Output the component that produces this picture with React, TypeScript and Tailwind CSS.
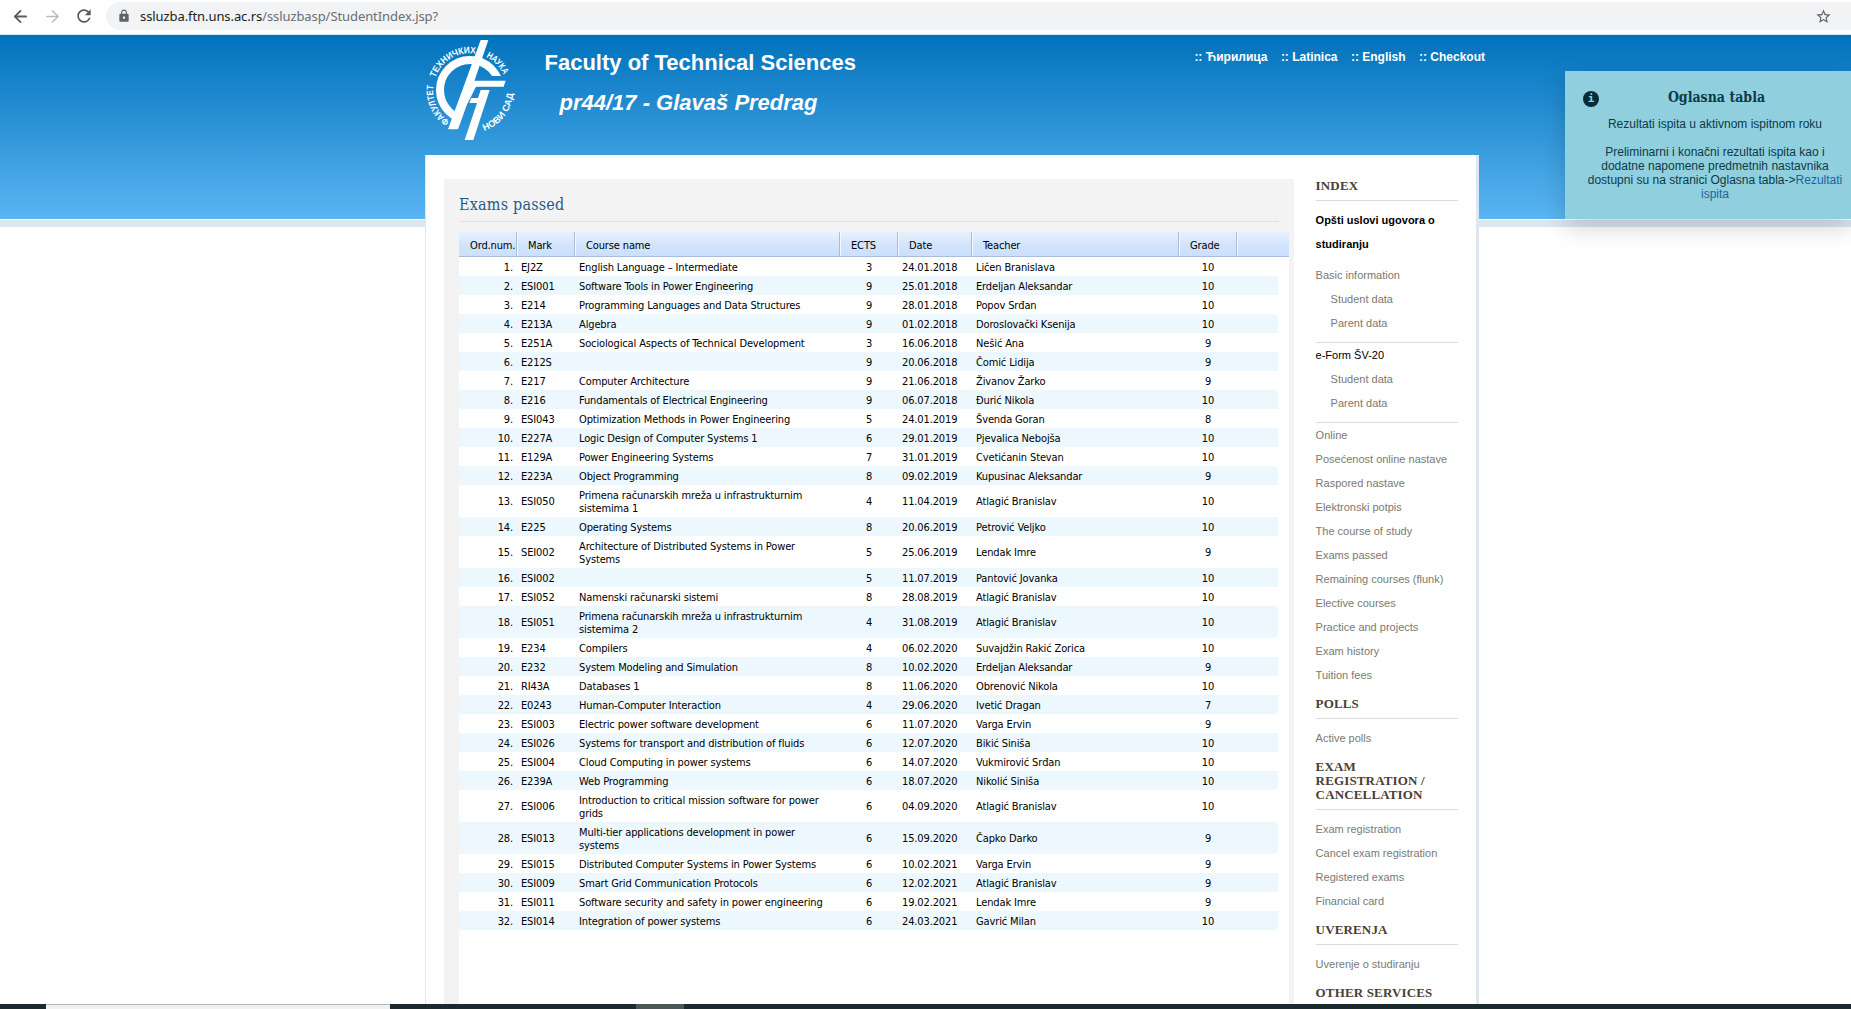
import { ArrowLeft, ArrowRight } from "lucide-react";
import { MdLock, MdRefresh, MdStarBorder } from "react-icons/md";

type Exam = [mark: string, course: string, ects: number, date: string, teacher: string, grade: number];

const EXAMS: Exam[] = [
  ["EJ2Z", "English Language – Intermediate", 3, "24.01.2018", "Ličen Branislava", 10],
  ["ESI001", "Software Tools in Power Engineering", 9, "25.01.2018", "Erdeljan Aleksandar", 10],
  ["E214", "Programming Languages and Data Structures", 9, "28.01.2018", "Popov Srđan", 10],
  ["E213A", "Algebra", 9, "01.02.2018", "Doroslovački Ksenija", 10],
  ["E251A", "Sociological Aspects of Technical Development", 3, "16.06.2018", "Nešić Ana", 9],
  ["E212S", "", 9, "20.06.2018", "Čomić Lidija", 9],
  ["E217", "Computer Architecture", 9, "21.06.2018", "Živanov Žarko", 9],
  ["E216", "Fundamentals of Electrical Engineering", 9, "06.07.2018", "Đurić Nikola", 10],
  ["ESI043", "Optimization Methods in Power Engineering", 5, "24.01.2019", "Švenda Goran", 8],
  ["E227A", "Logic Design of Computer Systems 1", 6, "29.01.2019", "Pjevalica Nebojša", 10],
  ["E129A", "Power Engineering Systems", 7, "31.01.2019", "Cvetićanin Stevan", 10],
  ["E223A", "Object Programming", 8, "09.02.2019", "Kupusinac Aleksandar", 9],
  ["ESI050", "Primena računarskih mreža u infrastrukturnim\nsistemima 1", 4, "11.04.2019", "Atlagić Branislav", 10],
  ["E225", "Operating Systems", 8, "20.06.2019", "Petrović Veljko", 10],
  ["SEI002", "Architecture of Distributed Systems in Power\nSystems", 5, "25.06.2019", "Lendak Imre", 9],
  ["ESI002", "", 5, "11.07.2019", "Pantović Jovanka", 10],
  ["ESI052", "Namenski računarski sistemi", 8, "28.08.2019", "Atlagić Branislav", 10],
  ["ESI051", "Primena računarskih mreža u infrastrukturnim\nsistemima 2", 4, "31.08.2019", "Atlagić Branislav", 10],
  ["E234", "Compilers", 4, "06.02.2020", "Suvajdžin Rakić Zorica", 10],
  ["E232", "System Modeling and Simulation", 8, "10.02.2020", "Erdeljan Aleksandar", 9],
  ["RI43A", "Databases 1", 8, "11.06.2020", "Obrenović Nikola", 10],
  ["E0243", "Human-Computer Interaction", 4, "29.06.2020", "Ivetić Dragan", 7],
  ["ESI003", "Electric power software development", 6, "11.07.2020", "Varga Ervin", 9],
  ["ESI026", "Systems for transport and distribution of fluids", 6, "12.07.2020", "Bikić Siniša", 10],
  ["ESI004", "Cloud Computing in power systems", 6, "14.07.2020", "Vukmirović Srđan", 10],
  ["E239A", "Web Programming", 6, "18.07.2020", "Nikolić Siniša", 10],
  ["ESI006", "Introduction to critical mission software for power\ngrids", 6, "04.09.2020", "Atlagić Branislav", 10],
  ["ESI013", "Multi-tier applications development in power\nsystems", 6, "15.09.2020", "Čapko Darko", 9],
  ["ESI015", "Distributed Computer Systems in Power Systems", 6, "10.02.2021", "Varga Ervin", 9],
  ["ESI009", "Smart Grid Communication Protocols", 6, "12.02.2021", "Atlagić Branislav", 9],
  ["ESI011", "Software security and safety in power engineering", 6, "19.02.2021", "Lendak Imre", 9],
  ["ESI014", "Integration of power systems", 6, "24.03.2021", "Gavrić Milan", 10],
];

function BrowserBar() {
  return (
    <div className="flex h-[35px] shrink-0 items-start border-b border-[#cfe6f5] bg-white">
      <div className="flex h-8 w-[106px] items-center pl-[11px]">
        <ArrowLeft size={19} strokeWidth={2.3} className="text-[#5a5d61]" />
        <ArrowRight size={19} strokeWidth={2} className="ml-[13px] text-[#b9bbbd]" />
        <MdRefresh size={20} className="ml-[12px] text-[#55585c]" />
      </div>
      <div className="mt-[2px] flex h-7 flex-1 items-center rounded-l-full bg-[#f1f3f4] pl-[11px]">
        <MdLock size={14} className="text-[#5f6368]" />
        <div className="ml-[9px] flex-1 font-['Noto_Sans',sans-serif] text-[13px] leading-7 tracking-[-0.08px] text-[#6b6e72]">
          <span className="text-[#202124]">ssluzba.ftn.uns.ac.rs</span>/ssluzbasp/StudentIndex.jsp?
        </div>
        <MdStarBorder size={17} className="mr-[19px] text-[#5f6368]" />
      </div>
    </div>
  );
}

function FacultyLogo() {
  return (
    <svg width="90" height="104" viewBox="45 24 270 312" className="shrink-0">
      <defs>
        <path id="ring-a" d="M119 273A110 110 0 0 1 70.5 164" />
        <path id="ring-b" d="M76 143A110 110 0 0 1 216 76" />
        <path id="ring-c" d="M228 81A110 110 0 0 1 283 140" />
        <path id="ring-d" d="M222.7 302.7A130 130 0 0 0 310 176" />
        <clipPath id="arc-clip">
          <path d="M45 24H315V138H180L124 300H45Z" />
        </clipPath>
      </defs>
      <circle cx="180" cy="180" r="90" fill="none" stroke="#fff" strokeWidth="24" clipPath="url(#arc-clip)" />
      <g fill="#fff">
        <path d="M212 30H235L144 298H114Z" />
        <path d="M188 152H287L281 170H198L170 226L144 298Z" />
        <path d="M212 180H239L190 330H164L201 219H178L184 204H204Z" />
        <g fontFamily="'Liberation Sans Narrow','Liberation Sans',sans-serif" fontSize="28" fontWeight="bold">
          <text>
            <textPath href="#ring-a" textLength="124" lengthAdjust="spacingAndGlyphs">ФАКУЛТЕТ</textPath>
          </text>
          <text>
            <textPath href="#ring-b" textLength="152" lengthAdjust="spacingAndGlyphs">ТЕХНИЧКИХ</textPath>
          </text>
          <text>
            <textPath href="#ring-c" textLength="76" lengthAdjust="spacingAndGlyphs">НАУКА</textPath>
          </text>
          <text>
            <textPath href="#ring-d" textLength="150" lengthAdjust="spacingAndGlyphs">НОВИ САД</textPath>
          </text>
        </g>
      </g>
    </svg>
  );
}

function Header() {
  return (
    <header className="flex h-[120px] font-bold text-white">
      <div className="pt-[3px]">
        <FacultyLogo />
      </div>
      <div className="ml-[29.5px] pt-[14px] text-[22px] leading-7">
        <div>Faculty of Technical Sciences</div>
        <div className="mt-3 ml-[15px] italic">pr44/17 - Glavaš Predrag</div>
      </div>
      <nav className="ml-auto flex gap-[13.4px] pt-[14px] text-[12px] leading-4">
        <a>:: Ћирилица</a>
        <a>:: Latinica</a>
        <a>:: English</a>
        <a>:: Checkout</a>
      </nav>
    </header>
  );
}

const HEAD = "h-6 border-r border-[#a9bfd9] pl-[11px] shadow-[1px_0_0_#f4f8fd]";
const COLS = "grid grid-cols-[58px_58px_265px_58px_74px_207px_58px_1fr]";

function ExamTable() {
  return (
    <div className="w-[830px] flex-1 bg-white font-['DejaVu_Sans_Condensed','DejaVu_Sans',sans-serif] text-[11px] tracking-[-0.13px] text-black [font-stretch:condensed]">
      <div className={COLS + " h-[25px] border-b border-[#a9bfd9] bg-linear-to-b from-[#e6f0fd] from-10% via-[#d3e4fc] via-50% to-[#cbe0fe] leading-[28px]"}>
        <span className={HEAD + " whitespace-nowrap"}>Ord.num.</span>
        <span className={HEAD}>Mark</span>
        <span className={HEAD}>Course name</span>
        <span className={HEAD}>ECTS</span>
        <span className={HEAD}>Date</span>
        <span className={HEAD}>Teacher</span>
        <span className={HEAD}>Grade</span>
      </div>
      <div className="w-[819px]">
        {EXAMS.map(([mark, course, ects, date, teacher, grade], i) => (
          <div key={i} className={COLS + " items-center pt-[3.75px] pb-[2.25px] leading-[13px] odd:bg-white even:bg-[#edf7fe]"}>
            <span className="pr-[4px] text-right">{i + 1}.</span>
            <span className="pl-[4px]">{mark}</span>
            <span className="pl-[4px] whitespace-pre">{course}</span>
            <span className="text-center">{ects}</span>
            <span className="pl-[4px]">{date}</span>
            <span className="pl-[4px]">{teacher}</span>
            <span className="text-center">{grade}</span>
          </div>
        ))}
      </div>
    </div>
  );
}

function SideTitle({ children }: { children: string }) {
  return (
    <h3 className="mt-[10px] mb-[7px] border-b border-[#dcdcdc] pb-[7px] font-['Liberation_Serif',serif] text-[13px] leading-[14px] font-bold tracking-[0.15px] whitespace-pre-line text-[#4a4036]">
      {children}
    </h3>
  );
}

function Links({ items, sub = false }: { items: string[]; sub?: boolean }) {
  return (
    <ul className={sub ? "pl-[15px]" : ""}>
      {items.map((t) => (
        <li key={t}>{t}</li>
      ))}
    </ul>
  );
}

function Sidebar() {
  return (
    <aside className="ml-[21.6px] w-[142px] pt-[14px] text-[11px] leading-6 text-[#7a7a70]">
      <SideTitle>INDEX</SideTitle>
      <div className="mb-[7px] font-bold text-black">
        Opšti uslovi ugovora o
        <br />
        studiranju
      </div>
      <div>Basic information</div>
      <Links sub items={["Student data", "Parent data"]} />
      <div className="mt-[7px] border-t border-[#dcdcdc] text-black">e-Form ŠV-20</div>
      <Links sub items={["Student data", "Parent data"]} />
      <div className="mt-[7px] border-t border-[#dcdcdc]" />
      <Links
        items={[
          "Online",
          "Posećenost online nastave",
          "Raspored nastave",
          "Elektronski potpis",
          "The course of study",
          "Exams passed",
          "Remaining courses (flunk)",
          "Elective courses",
          "Practice and projects",
          "Exam history",
          "Tuition fees",
        ]}
      />
      <SideTitle>POLLS</SideTitle>
      <Links items={["Active polls"]} />
      <SideTitle>{"EXAM\nREGISTRATION /\nCANCELLATION"}</SideTitle>
      <Links items={["Exam registration", "Cancel exam registration", "Registered exams", "Financial card"]} />
      <SideTitle>UVERENJA</SideTitle>
      <Links items={["Uverenje o studiranju"]} />
      <SideTitle>OTHER SERVICES</SideTitle>
    </aside>
  );
}

function Notice() {
  return (
    <div className="absolute top-[71px] right-0 flex h-[148px] w-[286px] bg-[#90cfde] pt-[18px] text-[#0c3a47] shadow-[0_8px_24px_rgba(0,0,0,0.18)]">
      <div className="mt-[2px] ml-[18px] flex size-4 shrink-0 items-center justify-center rounded-full bg-[#082b35] font-['DejaVu_Sans_Mono',monospace] text-[11px] leading-4 font-bold text-[#90cfde]">
        i
      </div>
      <div className="-ml-[18px] flex-1 pr-[4px] pl-[2px] text-center text-[12px] leading-[14px]">
        <h4 className="mb-[11px] pl-[3px] font-['DejaVu_Serif_Condensed','DejaVu_Serif',serif] text-[14px] leading-[17px] font-bold [font-stretch:condensed]">
          Oglasna tabla
        </h4>
        <p className="mb-[14px]">Rezultati ispita u aktivnom ispitnom roku</p>
        <p>
          Preliminarni i konačni rezultati ispita kao i
          <br />
          dodatne napomene predmetnih nastavnika
          <br />
          dostupni su na stranici Oglasna tabla-&gt;<a className="text-[#1a64a0]">Rezultati</a>
          <br />
          <a className="text-[#1a64a0]">ispita</a>
        </p>
      </div>
    </div>
  );
}

export default function App() {
  return (
    <div className="relative flex h-[1009px] w-[1851px] flex-col overflow-hidden bg-white font-['Liberation_Sans',Arial,sans-serif]">
      <BrowserBar />
      <div className="min-h-0 flex-1 overflow-hidden bg-[linear-gradient(to_bottom,#0072bc_0,#5ab5f2_184px,#fff_184px,#fff_185px,#dbe8f2_185px,#dbe8f2_192px,#fff_192px)] pl-[425px]">
        <div className="flex h-full w-[1054px] flex-col">
          <div className="w-[1060px]">
            <Header />
          </div>
          <div className="flex min-h-0 flex-1 overflow-hidden border-r-[3px] border-l border-[#dbe8f2] bg-white pl-[18px]">
            <main className="mt-[24px] flex w-[850px] flex-col bg-[#f3f3f3] pl-[15px]">
              <h2 className="mb-[10px] w-[820px] border-b border-[#dde1e5] pt-[14px] pb-[4px] font-['DejaVu_Serif_Condensed','DejaVu_Serif',serif] text-[16px] leading-6 tracking-[0.2px] text-[#1f5c8e] [font-stretch:condensed]">
                Exams passed
              </h2>
              <ExamTable />
            </main>
            <Sidebar />
          </div>
        </div>
      </div>
      <div className="flex h-[5px] shrink-0 bg-[#1a2a2f]">
        <div className="ml-[46px] w-[344px] border-t border-[#b5b5b5] bg-[#f1f1f1]" />
        <div className="ml-[246px] w-[48px] bg-[#4b5659]" />
      </div>
      <Notice />
    </div>
  );
}
